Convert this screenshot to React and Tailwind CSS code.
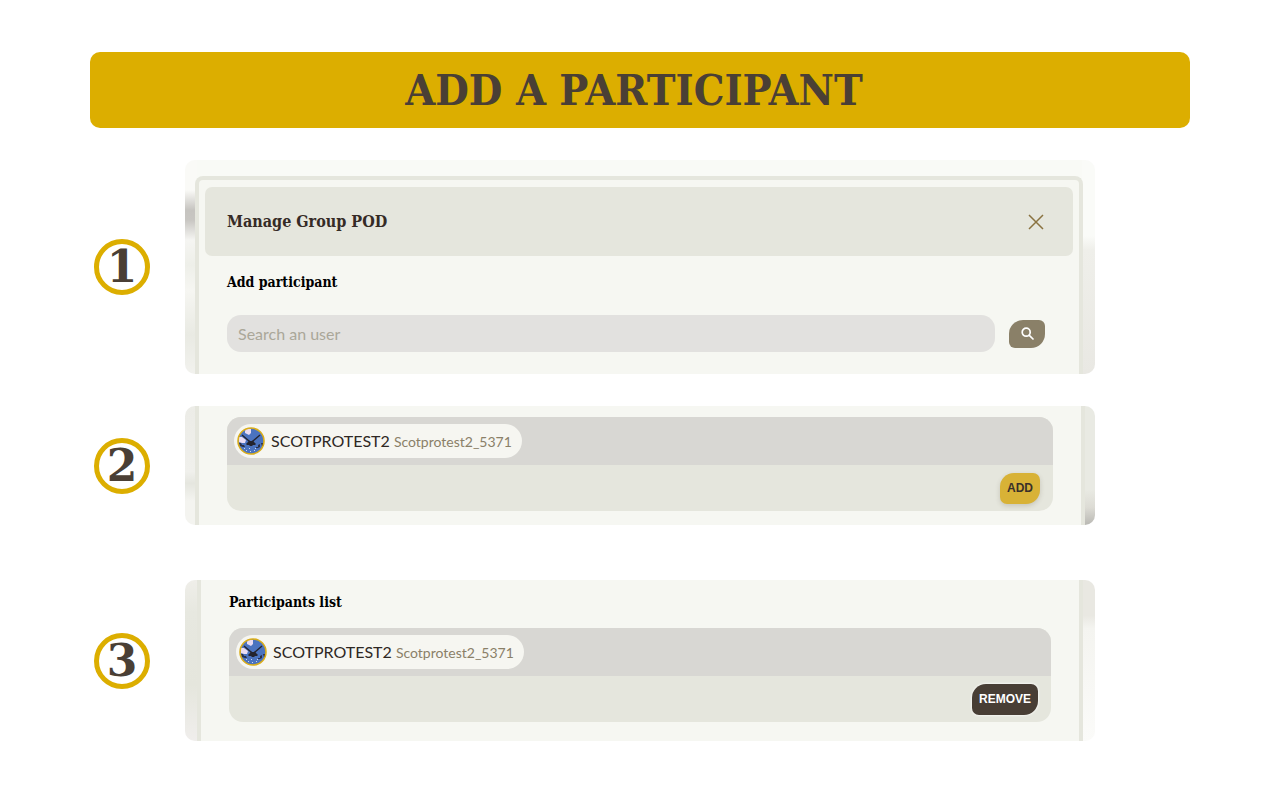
import { useId } from "react";

const slab = "font-['DejaVu_Serif_Condensed','DejaVu_Serif',serif]";
const humanist = "font-['Lato','Open_Sans',sans-serif]";

function Avatar() {
  const clip = useId();
  return (
    <svg viewBox="0 0 28 28" className="size-7 shrink-0" aria-hidden="true">
      <clipPath id={clip}>
        <circle cx="14" cy="14" r="13" />
      </clipPath>
      <g clipPath={`url(#${clip})`}>
        <path d="M0 0h28v28H0z" fill="#4b73bf" />
        <path d="M9 2h5v4l-2 2-4-2 0-2zM2 10l3 0 4 3-1 3-3 0-3-1z" fill="#eadcf2" />
        <path
          d="M5 8l7 6M23 8l-7 6"
          fill="none"
          stroke="#24242f"
          strokeWidth="1.4"
        />
        <path d="M12 13l1 1h2l1-1 1 2 2 2-1 1-2 0-1 1h-2l-1-1-2 0-1-1 2-2z" fill="#24242f" />
        <path d="M2 16l2 0 1 2 2 0 1 2-2 0-3-1zM21 18l2-1v3l-2 1zM24 16h2v3h-1zM19 20h2v1h-2z" fill="#2b2f45" />
        <path d="M9 23h1v1H9zM13 24h1v1h-1zM17 23h1v1h-1zM12 21h1v1h-1zM7 21h1v1H7zM18 21h1v1h-1z" fill="#c9d6ee" />
      </g>
      <circle cx="14" cy="14" r="13" fill="none" stroke="#d9ad1c" strokeWidth="1.6" />
    </svg>
  );
}

function Step({ number, className, children }) {
  return (
    <li className={`grid grid-cols-[95px_minmax(0,1fr)_95px] items-center ${className}`}>
      <span className="ml-1 flex size-[56px] items-center justify-center rounded-full border-[5px] border-[#dcae00] font-['DejaVu_Serif',serif] text-[44px] leading-none font-bold text-[#4a3f35]">
        {number}
      </span>
      {children}
    </li>
  );
}

function Participant({ action }) {
  return (
    <div className="overflow-hidden rounded-[14px] bg-[#e5e6dd]">
      <div className="flex h-12 items-center bg-[#d8d7d3] px-[7px]">
        <div className="flex items-center gap-[6px] rounded-full bg-[#f6f6f1] py-[3px] pr-[10px] pl-[3px]">
          <Avatar />
          <p className={`${humanist} text-base leading-7 whitespace-nowrap text-[#2e2824]`}>
            SCOTPROTEST2 <span className="text-sm text-[#8a8068]">Scotprotest2_5371</span>
          </p>
        </div>
      </div>
      <div className="flex h-[46px] items-center justify-end px-[13px]">{action}</div>
    </div>
  );
}

const actionShape =
  "h-[31px] rounded-tl-[14px] rounded-tr-[7px] rounded-br-[14px] rounded-bl-[7px] px-[7px] font-['Liberation_Sans',sans-serif] text-xs font-bold";

export default function App() {
  return (
    <main className="mx-auto max-w-[1100px] pt-[52px] pb-14">
      <h1 className={`${slab} flex h-[76px] items-center justify-center rounded-[10px] bg-[#dcae00] pr-3 text-[43px] font-bold text-[#4a3f35]`}>
        ADD A PARTICIPANT
      </h1>

      <ol>
        <Step number="1" className="mt-8">
          <section className="overflow-hidden rounded-[10px] pt-4 pr-3 pl-[10px] [background:linear-gradient(#fafaf7_0_30px,#c6c4c0_50px,#c8c6c2_60px,#f5f5f2_80px,#eeefe9_105px,#f6f6f2_130px,#e9eae3_175px,#f2f2ee)_left/12px_100%_no-repeat,linear-gradient(#fafbf8_0_76px,#efefea_90px,#e9e8e3)_right/13px_100%_no-repeat,#f9faf6]">
            <div className="rounded-t-[8px] border-4 border-b-0 border-[#e5e6dd] bg-[#f6f7f2] px-[6px] pt-[7px] pb-[22px]">
              <header className="flex h-[69px] items-center justify-between rounded-[7px] bg-[#e5e6dd] pr-[29px] pl-[22px]">
                <h2 className={`${slab} text-base font-bold text-[#352b26]`}>Manage Group POD</h2>
                <button type="button" aria-label="Close">
                  <svg viewBox="0 0 16 16" className="size-4" fill="none" stroke="#8a7340" strokeWidth="1.5">
                    <path d="M1 1l14 14M15 1L1 15" />
                  </svg>
                </button>
              </header>
              <form className="pr-[28px] pl-[22px]" onSubmit={(e) => e.preventDefault()}>
                <label htmlFor="user-search" className={`${slab} mt-4 block text-sm leading-5 font-bold text-black`}>
                  Add participant
                </label>
                <div className="mt-[23px] flex items-center gap-[14px]">
                  <input
                    id="user-search"
                    type="search"
                    placeholder="Search an user"
                    className={`${humanist} h-[37px] min-w-0 flex-1 rounded-[14px] bg-[#e2e1df] px-[11px] text-base placeholder:text-[#aaa799]`}
                  />
                  <button type="submit" aria-label="Search" className="flex h-7 w-9 items-center justify-center rounded-tl-[14px] rounded-tr-[6px] rounded-br-[14px] rounded-bl-[6px] bg-[#8a8068]">
                    <svg viewBox="0 0 13 13" className="size-[13px]" fill="none" stroke="white" strokeWidth="1.7" strokeLinecap="round">
                      <circle cx="5.2" cy="5.2" r="4" />
                      <path d="M8.3 8.3l3.7 3.7" />
                    </svg>
                  </button>
                </div>
              </form>
            </div>
          </section>
        </Step>

        <Step number="2" className="mt-8">
          <section className="overflow-hidden rounded-[10px] pr-[10px] pl-[10px] [background:linear-gradient(#ecece7,#f0f0ec_55%,#e5e6df_65%,#f4f4f0_80%)_left/12px_100%_no-repeat,linear-gradient(#e9eae3_0_70%,#dddcd5_85%,#b9b8b3)_right/12px_100%_no-repeat,#f6f7f2]">
            <div className="border-x-4 border-[#e5e6dd] bg-[#f6f7f2] pt-[11px] pr-7 pb-[14px] pl-7">
              <Participant
                action={
                  <button type="button" className={`${actionShape} bg-[#d8b236] text-[#3a302a] shadow-[0_2px_5px_rgba(80,70,50,0.2)]`}>
                    ADD
                  </button>
                }
              />
            </div>
          </section>
        </Step>

        <Step number="3" className="mt-[55px]">
          <section className="overflow-hidden rounded-[10px] pr-3 pl-3 [background:linear-gradient(#efeee9,#e7e8e0_20%,#e5e6dd_65%,#f0eeec)_left/13px_100%_no-repeat,linear-gradient(#e9e8e2_0_22%,#f4f4f0_30%,#fbfbf9)_right/13px_100%_no-repeat,#f6f7f2]">
            <div className="border-x-4 border-[#e5e6dd] bg-[#f6f7f2] px-7 pt-3 pb-[19px]">
              <h2 className={`${slab} mb-4 text-sm leading-5 font-bold text-black`}>Participants list</h2>
              <Participant
                action={
                  <button type="button" className={`${actionShape} bg-[#483e35] text-white shadow-[0_0_2px_1px_rgba(255,255,255,0.6)]`}>
                    REMOVE
                  </button>
                }
              />
            </div>
          </section>
        </Step>
      </ol>
    </main>
  );
}
